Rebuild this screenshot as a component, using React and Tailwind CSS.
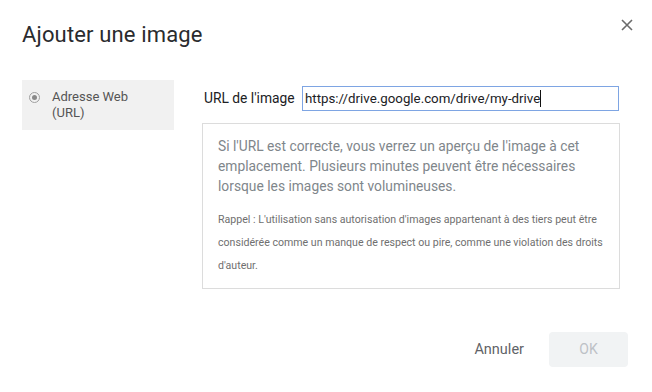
import React from 'react'

function CloseIcon() {
  return (
    <svg width="12" height="12" viewBox="0 0 12 12" className="block">
      <path d="M1 1 L11 11 M11 1 L1 11" stroke="#6b6b6b" strokeWidth="1.6" fill="none" />
    </svg>
  )
}

export default function App() {
  return (
    <div
      className="w-[652px] h-[392px] bg-white relative flex flex-col overflow-hidden"
      style={{ fontFamily: 'Roboto, "Noto Sans", Arial, sans-serif' }}
    >
      {/* header */}
      <div className="flex items-start justify-between pl-[22px] pr-[19px] pt-[21px]">
        <h1 className="text-[22px] leading-[28px] text-[#2a2b2e] font-normal tracking-[0.15px]">Ajouter une image</h1>
        <button className="mt-[-2px] w-[12px] h-[12px]" aria-label="Fermer">
          <CloseIcon />
        </button>
      </div>

      {/* body */}
      <div className="flex mt-[31px] pl-[22px]">
        <div className="w-[152px] h-[50px] bg-[#f1f1f1] flex items-start pl-[7px] pt-[9px] gap-[12px]">
          <span className="mt-[3px] w-[11px] h-[11px] rounded-full border border-[#a0a0a0] flex items-center justify-center shrink-0">
            <span className="w-[5px] h-[5px] rounded-full bg-[#8a8a8a]" />
          </span>
          <span className="text-[13px] leading-[16px] text-[#555] w-[90px]">Adresse Web (URL)</span>
        </div>

        <div className="ml-[28px] w-[418px] flex flex-col">
          <div className="flex items-center h-[25px] mt-[6px]">
            <span className="ml-[2px] w-[98px] text-[13.8px] text-[#202124]">URL de l'image</span>
            <div className="w-[317px] h-[25px] border border-[#7ea5e3] flex items-center pl-[2px]">
              <span className="text-[13.3px] text-[#202124]">https://drive.google.com/drive/my-drive</span>
              <span className="w-px h-[17px] bg-[#111]" />
            </div>
          </div>

          <div className="mt-[12px] h-[166px] border border-[#dcdcdc] pl-[15px] pr-[12px] pt-[12px]">
            <p className="text-[13.8px] leading-[20px] text-[#80868b]">
              Si l'URL est correcte, vous verrez un aperçu de l'image à cet emplacement. Plusieurs minutes peuvent être nécessaires lorsque les images sont volumineuses.
            </p>
            <p className="mt-[12px] mr-[-8px] text-[10.6px] leading-[23px] text-[#6f6f6f]">
              Rappel : L'utilisation sans autorisation d'images appartenant à des tiers peut être considérée comme un manque de respect ou pire, comme une violation des droits d'auteur.
            </p>
          </div>
        </div>
      </div>

      {/* footer */}
      <div className="mt-auto mb-[25px] flex items-center justify-end pr-[24px] gap-[25px]">
        <button className="text-[14.5px] text-[#5f6368] h-[35px] mt-[1px]">Annuler</button>
        <button className="w-[79px] h-[35px] rounded-[4px] bg-[#f1f3f4] text-[14px] text-[#bdc1c6]">OK</button>
      </div>
    </div>
  )
}
